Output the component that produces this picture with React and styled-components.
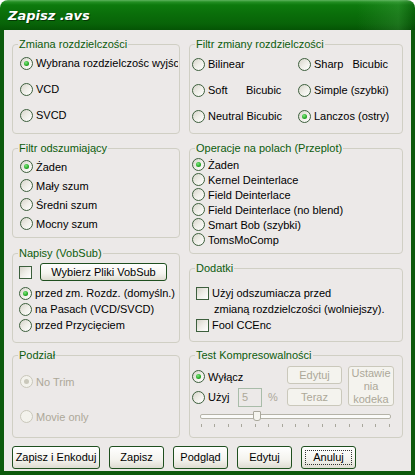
import React from 'react'
import styled, { createGlobalStyle } from 'styled-components';

const Global = createGlobalStyle`
    html, body { margin: 0; padding: 0; background: #fff; }
    body { font-family: "Liberation Sans", Arial, sans-serif; font-size: 11px; }
`;

const Window = styled.div`
    width: 415px;
    height: 475px;
    display: flex;
    flex-direction: column;
`;

const TitleBar = styled.div`
    height: 30px;
    flex-shrink: 0;
    box-sizing: border-box;
    padding-left: 8px;
    display: flex;
    align-items: center;
    border-radius: 8px 8px 0 0;
    background:
        linear-gradient(to right, rgba(255,255,255,0) 86%, rgba(120,200,120,0.18) 96%, rgba(0,0,0,0.15) 100%),
        linear-gradient(to bottom, #5fb45f 0, #238f23 2px, #0d7a0d 5px, #0a6e0a 14px, #086308 24px, #055405 30px);
    color: #fff;
    font-family: "DejaVu Sans", "Liberation Sans", sans-serif;
    font-weight: 700;
    font-style: italic;
    font-size: 13px;
    text-shadow: 1px 1px 0 #053805;
`;

const Body = styled.div`
    flex: 1;
    background: #ece9e8;
    border: 4px solid #0c5a0c;
    border-top: none;
    padding: 14px 8px 0 8px;
    display: flex;
    flex-direction: column;
`;

const Columns = styled.div`
    display: flex;
    gap: 9px;
`;

const Column = styled.div`
    width: ${p => p.$w}px;
    display: flex;
    flex-direction: column;
`;

const Group = styled.div`
    position: relative;
    box-sizing: border-box;
    height: ${p => p.$h}px;
    margin-top: ${p => p.$mt || 0}px;
    border: 1px solid #d0cfc4;
    border-radius: 4px;
    padding: ${p => p.$pad};
    display: flex;
    flex-direction: column;
`;

const Legend = styled.span`
    position: absolute;
    top: -7px;
    left: 5px;
    padding: 0 1px;
    line-height: 13px;
    background: #ece9e8;
    color: #0c5c0c;
`;

const OptionRow = styled.div`
    display: flex;
    align-items: center;
    gap: 3px;
    height: ${p => p.$h}px;
    min-width: 0;
    overflow: hidden;
    white-space: pre;
    color: ${p => p.$disabled ? '#aca899' : '#000'};
`;

const RadioDot = styled.span`
    position: relative;
    flex-shrink: 0;
    width: 13px;
    height: 13px;
    box-sizing: border-box;
    border-radius: 50%;
    border: 1px solid ${p => p.$disabled ? '#c9c7ba' : '#3d5f3d'};
    background: ${p => p.$disabled ? '#f3f2ec' : 'linear-gradient(135deg, #d6d4ca 0%, #efeee8 50%, #ffffff 100%)'};
    &::after {
        content: '';
        display: ${p => p.$checked ? 'block' : 'none'};
        position: absolute;
        left: 3px;
        top: 3px;
        width: 5px;
        height: 5px;
        border-radius: 50%;
        background: ${p => p.$disabled ? '#cac8bb' : 'radial-gradient(circle at 40% 35%, #7ee87e, #25a825 60%, #158015)'};
    }
`;

const Box = styled.span`
    flex-shrink: 0;
    width: 13px;
    height: 13px;
    box-sizing: border-box;
    border: 1px solid #3d5f3d;
    background: linear-gradient(135deg, #d6d4ca 0%, #efeee8 50%, #ffffff 100%);
    margin-top: ${p => p.$mt || 0}px;
`;

const Grid2 = styled.div`
    display: grid;
    grid-template-columns: 106px 1fr;
`;

const Button = styled.button`
    position: relative;
    width: ${p => p.$w}px;
    height: ${p => p.$h || 23}px;
    flex-shrink: 0;
    box-sizing: border-box;
    padding: 0;
    border: 1px solid ${p => p.$disabled ? '#cac8bb' : '#1f4f1f'};
    border-radius: 3px;
    background: ${p => p.$disabled ? '#f4f3ee' : 'linear-gradient(to bottom, #ffffff 0%, #f4f3ee 60%, #dedcd2 100%)'};
    color: ${p => p.$disabled ? '#aca899' : '#000'};
    font-family: "Liberation Sans", Arial, sans-serif;
    font-size: 11px;
    line-height: 13px;
    &::after {
        content: '';
        display: ${p => p.$focus ? 'block' : 'none'};
        position: absolute;
        inset: 3px;
        border: 1px dotted #333;
    }
`;

const SubRow = styled.div`
    display: flex;
    align-items: center;
    gap: 8px;
    height: 18px;
    margin-bottom: 4px;
`;

const CheckRow = styled.div`
    display: flex;
    align-items: ${p => p.$top ? 'flex-start' : 'center'};
    gap: 3px;
    line-height: 16px;
`;

const Lines = styled.div`
    display: flex;
    flex-direction: column;
    & > span + span { padding-left: 2px; }
`;

const TestTop = styled.div`
    display: flex;
    align-items: flex-start;
`;

const TestLeft = styled.div`
    width: 95px;
    display: flex;
    flex-direction: column;
`;

const Label = styled.span`
    min-width: ${p => p.$w || 0}px;
`;

const NumInput = styled.div`
    width: 24px;
    height: 19px;
    box-sizing: border-box;
    border: 1px solid #a9bca9;
    padding-left: 3px;
    line-height: 17px;
    color: #aca899;
`;

const Percent = styled.span`
    margin-left: 3px;
    color: #aca899;
`;

const BtnStack = styled.div`
    display: flex;
    flex-direction: column;
    gap: 4px;
    margin-right: 6px;
`;

const Slider = styled.div`
    position: relative;
    width: 191px;
    margin: 7px 0 0 8px;
`;

const Track = styled.div`
    height: 5px;
    box-sizing: border-box;
    border: 1px solid #b5b3a8;
    border-radius: 2px;
    background: #fbfbf9;
`;

const Thumb = styled.div`
    position: absolute;
    left: 53px;
    top: -3px;
    width: 6px;
    height: 8px;
    border: 1px solid #aaa89c;
    border-radius: 1px 1px 3px 3px;
    background: #f6f5f0;
`;

const Ticks = styled.div`
    display: flex;
    justify-content: space-between;
    padding: 0 1px;
    margin-top: 5px;
`;

const Tick = styled.span`
    width: 1px;
    height: 3px;
    background: #a9a79c;
`;

const ButtonBar = styled.div`
    display: flex;
    gap: 9px;
    margin-top: 8px;
`;

function Option({ checked, disabled, h, children }) {
    return <OptionRow $h={h} $disabled={disabled}>
        <RadioDot $checked={checked} $disabled={disabled}/>
        <span>{children}</span>
    </OptionRow>
}

export default function App()
{
    return <>
        <Global/>
        <Window>
            <TitleBar>Zapisz .avs</TitleBar>
            <Body>
                <Columns>
                    <Column $w={168}>
                        <Group $h={90} $pad="5px 1px 0 7px">
                            <Legend>Zmiana rozdzielczości</Legend>
                            <Option h={26} checked>Wybrana rozdzielczośc wyjściowa</Option>
                            <Option h={26}>VCD</Option>
                            <Option h={26}>SVCD</Option>
                        </Group>
                        <Group $h={90} $mt={14} $pad="8px 1px 0 7px">
                            <Legend>Filtr odszumiający</Legend>
                            <Option h={19} checked>Żaden</Option>
                            <Option h={19}>Mały szum</Option>
                            <Option h={19}>Średni szum</Option>
                            <Option h={19}>Mocny szum</Option>
                        </Group>
                        <Group $h={90} $mt={15} $pad="9px 1px 0 6px">
                            <Legend>Napisy (VobSub)</Legend>
                            <SubRow>
                                <Box/>
                                <Button $w={127} $h={18}>Wybierz Pliki VobSub</Button>
                            </SubRow>
                            <Option h={16} checked>przed zm. Rozdz. (domyśln.)</Option>
                            <Option h={16}>na Pasach (VCD/SVCD)</Option>
                            <Option h={16}>przed Przycięciem</Option>
                        </Group>
                        <Group $h={83} $mt={12} $pad="8px 1px 0 7px">
                            <Legend>Podział</Legend>
                            <Option h={35} disabled checked>No Trim</Option>
                            <Option h={35} disabled>Movie only</Option>
                        </Group>
                    </Column>
                    <Column $w={214}>
                        <Group $h={90} $pad="6px 1px 0 2px">
                            <Legend>Filtr zmiany rozdzielczości</Legend>
                            <Grid2>
                                <Option h={26}>Bilinear</Option>
                                <Option h={26}>{'Sharp   Bicubic'}</Option>
                                <Option h={26}>{'Soft      Bicubic'}</Option>
                                <Option h={26}>Simple (szybki)</Option>
                                <Option h={26}>Neutral Bicubic</Option>
                                <Option h={26} checked>Lanczos (ostry)</Option>
                            </Grid2>
                        </Group>
                        <Group $h={106} $mt={14} $pad="8px 1px 0 2px">
                            <Legend>Operacje na polach (Przeplot)</Legend>
                            <Option h={15} checked>Żaden</Option>
                            <Option h={15}>Kernel Deinterlace</Option>
                            <Option h={15}>Field Deinterlace</Option>
                            <Option h={15}>Field Deinterlace (no blend)</Option>
                            <Option h={15}>Smart Bob (szybki)</Option>
                            <Option h={15}>TomsMoComp</Option>
                        </Group>
                        <Group $h={74} $mt={14} $pad="16px 1px 0 6px">
                            <Legend>Dodatki</Legend>
                            <CheckRow $top>
                                <Box $mt={2}/>
                                <Lines>
                                    <span>Użyj odszumiacza przed</span>
                                    <span>zmianą rozdzielczości (wolniejszy).</span>
                                </Lines>
                            </CheckRow>
                            <CheckRow>
                                <Box/>
                                <span>Fool CCEnc</span>
                            </CheckRow>
                        </Group>
                        <Group $h={83} $mt={13} $pad="10px 1px 0 2px">
                            <Legend>Test Kompresowalności</Legend>
                            <TestTop>
                                <TestLeft>
                                    <Option h={21} checked>Wyłącz</Option>
                                    <OptionRow $h={20}>
                                        <RadioDot/>
                                        <Label $w={27}>Użyj</Label>
                                        <NumInput>5</NumInput>
                                        <Percent>%</Percent>
                                    </OptionRow>
                                </TestLeft>
                                <BtnStack>
                                    <Button $w={55} $h={18} $disabled>Edytuj</Button>
                                    <Button $w={55} $h={18} $disabled>Teraz</Button>
                                </BtnStack>
                                <Button $w={46} $h={40} $disabled>Ustawie<br/>nia<br/>kodeka</Button>
                            </TestTop>
                            <Slider>
                                <Track/>
                                <Thumb/>
                                <Ticks>
                                    {Array.from({ length: 15 }).map((_, i) => <Tick key={i}/>)}
                                </Ticks>
                            </Slider>
                        </Group>
                    </Column>
                </Columns>
                <ButtonBar>
                    <Button $w={88}>Zapisz i Enkoduj</Button>
                    <Button $w={55}>Zapisz</Button>
                    <Button $w={55}>Podgląd</Button>
                    <Button $w={55}>Edytuj</Button>
                    <Button $w={55} $focus>Anuluj</Button>
                </ButtonBar>
            </Body>
        </Window>
    </>
}
